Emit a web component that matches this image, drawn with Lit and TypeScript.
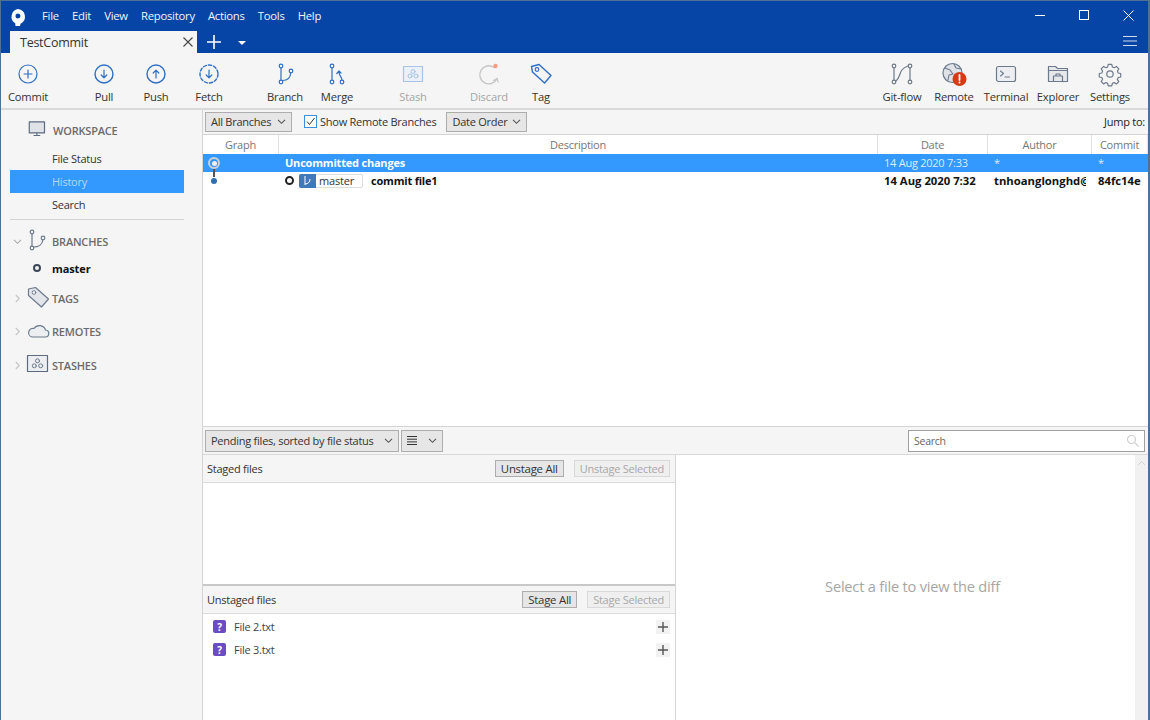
import { LitElement, html, css, svg } from "lit";
import { customElement } from "lit/decorators.js";

const B = "#2f6fc4";
const G = "#6d7a8c";

const ic = (body: unknown, w = 26, h = 26) =>
  html`<svg width=${w} height=${h} viewBox="0 0 26 26" fill="none" stroke-linecap="round" stroke-linejoin="round">${body}</svg>`;

const icons: Record<string, unknown> = {
  commit: ic(svg`<circle cx="13" cy="13" r="9" stroke=${B} stroke-width="1.2"/><path d="M13 9v8M9 13h8" stroke=${B} stroke-width="1.2"/>`),
  pull: ic(svg`<circle cx="13" cy="13" r="9" stroke=${B} stroke-width="1.4"/><path d="M13 9v7.5M10.2 14l2.8 2.8 2.8-2.8" stroke=${B} stroke-width="1.2"/>`),
  push: ic(svg`<circle cx="13" cy="13" r="9" stroke=${B} stroke-width="1.4"/><path d="M13 17V9.5M10.2 12L13 9.2l2.8 2.8" stroke=${B} stroke-width="1.2"/>`),
  fetch: ic(svg`<circle cx="13" cy="13" r="9" stroke=${B} stroke-width="1.4" stroke-dasharray="3.2 2"/><path d="M13 9v7.5M10.2 14l2.8 2.8 2.8-2.8" stroke=${B} stroke-width="1.2"/>`),
  branch: ic(svg`<circle cx="9" cy="5" r="1.8" stroke=${B} stroke-width="1.2"/><circle cx="9" cy="21" r="1.8" stroke=${B} stroke-width="1.2"/><circle cx="19" cy="10" r="1.8" stroke=${B} stroke-width="1.2"/><path d="M9 7v12M10.5 19.5c5 0 8-3 8.2-7.7" stroke=${B} stroke-width="1.2"/>`),
  merge: ic(svg`<circle cx="8" cy="5" r="1.8" stroke=${B} stroke-width="1.2"/><circle cx="8" cy="21" r="1.8" stroke=${B} stroke-width="1.2"/><circle cx="18" cy="21" r="1.8" stroke=${B} stroke-width="1.2"/><path d="M8 7v12M18 19c0-3-3-4-3-8M12.8 12.5L15 10l2 2" stroke=${B} stroke-width="1.2"/>`),
  stash: ic(svg`<rect x="3.5" y="5.5" width="19" height="15" fill="#eaf1fb" stroke="#a9c3e6" stroke-width="1.2"/><circle cx="13" cy="10.5" r="2" stroke="#a9c3e6"/><circle cx="10" cy="15" r="2" stroke="#a9c3e6"/><circle cx="16" cy="15" r="2" stroke="#a9c3e6"/>`),
  discard: ic(svg`<path d="M18 6.5A9 9 0 1 0 21 17.5" stroke="#c6c6c6" stroke-width="1.4"/><path d="M17.5 19.5l3.5-2 1.2 3.6" stroke="#c6c6c6" stroke-width="1.2"/><circle cx="19.5" cy="5" r="2.2" fill="#ff9c80"/>`),
  tag: ic(svg`<path d="M3.5 5.5l7.5-2 12 11-6.500 7.500-12-11z" stroke=${B} stroke-width="1.4"/><circle cx="9" cy="8.500" r="1.800" stroke=${B} stroke-width="1.2"/>`),
  gitflow: ic(svg`<circle cx="5" cy="5" r="1.8" stroke=${G} stroke-width="1.2"/><circle cx="5" cy="21" r="1.8" stroke=${G} stroke-width="1.2"/><circle cx="21" cy="5" r="1.8" stroke=${G} stroke-width="1.2"/><circle cx="21" cy="21" r="1.8" stroke=${G} stroke-width="1.2"/><path d="M5 7v12M21 7v12M7 20c5-3 2-12 12-15" stroke=${G} stroke-width="1.2"/>`),
  remote: ic(svg`<circle cx="11.500" cy="12" r="9.500" fill="#dfe3e8" stroke=${G} stroke-width="1.2"/><path d="M4 7l5 2 3 4-4 1-1 5M13 3l2 4 5 1M14 13l4 3" stroke=${G} stroke-width="1.1"/><circle cx="18.500" cy="18" r="7" fill="#d93a16"/><path d="M18.500 14v5" stroke="#fff" stroke-width="1.8"/><circle cx="18.500" cy="21.600" r="1" fill="#fff"/>`),
  terminal: ic(svg`<rect x="3.500" y="5.500" width="19" height="15" rx="2" fill="#eceef1" stroke=${G} stroke-width="1.2"/><path d="M7.500 10l3 2.500-3 2.500M12 16h4.500" stroke=${G} stroke-width="1.1"/>`),
  explorer: ic(svg`<path d="M3.500 20.500V5.500h7l2 2h10v13z" fill="#e6e8ec" stroke=${G} stroke-width="1.2"/><path d="M3.500 9.500h19" stroke=${G}/><path d="M8.500 20.500V15h9v5.500M11 15v-2h4v2" stroke=${G} stroke-width="1.2"/>`),
  settings: ic(svg`<circle cx="13" cy="13" r="3.200" stroke=${G} stroke-width="1.2"/><path d="M11 3.500h4l.6 2.800 2 .9 2.500-1.500 2.700 2.800-1.500 2.400.8 2.100 2.800.6v3.800l-2.800.6-.8 2-.2 0 1.700 2.500-2.700 2.700-2.500-1.600-2 .9-.6 2.800h-4l-.6-2.800-2-.9-2.500 1.600-2.700-2.700 1.600-2.500-.9-2-2.800-.6v-3.800l2.800-.6.9-2.100-1.600-2.400 2.700-2.800 2.500 1.500 2-.9z" transform="translate(1.300 .3) scale(.9)" stroke=${G} stroke-width="1.3"/>`),
  monitor: ic(svg`<rect x="1.500" y="3.500" width="18" height="13" fill="#dfe3e8" stroke="#5d6b80" stroke-width="1.4"/><path d="M7 19.500h7M10.500 17v2" stroke="#5d6b80" stroke-width="1.3"/>`, 22, 22),
  sbranch: ic(svg`<circle cx="6" cy="4" r="1.800" stroke=${G} stroke-width="1.2"/><circle cx="6" cy="20" r="1.800" stroke=${G} stroke-width="1.2"/><circle cx="17" cy="10" r="1.800" stroke=${G} stroke-width="1.2"/><path d="M6 6v12M7.500 19c5.500 0 9-3 9.300-7.300" stroke=${G} stroke-width="1.2"/>`),
  stags: ic(svg`<path d="M2.500 4l7-1.500 13 11.500-7 8-13-11.500z" fill="#e2e5ea" stroke=${G} stroke-width="1.2"/><circle cx="8" cy="7.500" r="1.800" fill="#fff" stroke=${G}/>`),
  sremotes: ic(svg`<path d="M6 18h13a3.500 3.500 0 0 0 .5-7A6.500 6.500 0 0 0 8 9.500 4.300 4.300 0 0 0 6 18z" fill="#eceef1" stroke=${G} stroke-width="1.200"/>`),
  sstash: ic(svg`<rect x="1.500" y="3.500" width="20" height="16" fill="#eceef1" stroke="#5d6b80" stroke-width="1.200"/><circle cx="11.500" cy="8.800" r="2" stroke=${G}/><circle cx="8.300" cy="13.800" r="2" stroke=${G}/><circle cx="14.700" cy="13.800" r="2" stroke=${G}/>`),
};

const chevron = (dir: "down" | "right", color = "#555") => html`<svg class="chev" width="9" height="9" viewBox="0 0 9 9" fill="none" stroke=${color} stroke-width="1.1">
  <path d=${dir === "down" ? "M1 2.800l3.500 3.500L8 2.800" : "M2.800 1l3.500 3.500L2.800 8"} /></svg>`;

@customElement("app-root")
export class AppRoot extends LitElement {
  static styles = css`
    :host {
      display: flex;
      flex-direction: column;
      width: 1150px;
      height: 720px;
      overflow: hidden;
      font-family: "Open Sans", "Noto Sans", sans-serif;
      font-size: 11px;
      letter-spacing: -0.25px;
      color: #222;
      background: #f5f5f5;
      box-sizing: border-box;
      border-left: 1px solid #4f7195;
      border-right: 2px solid #4f7195;
      border-top: 1px solid #4f7195;
    }
    * { box-sizing: border-box; }

    .titlebar { height: 52px; background: #0645a5; color: #fff; display: flex; flex-direction: column; flex: none; }
    .top { height: 30px; padding-bottom: 2px; display: flex; align-items: center; }
    .logo { width: 41px; padding: 4px 0 0 9px; display: flex; }
    .menu { display: flex; gap: 13.100px; font-size: 11.300px; color: #f0f4fb; }
    .winctl { margin-left: auto; display: flex; }
    .winctl svg { display: block; }
    .winbtn { width: 44px; height: 28px; display: flex; align-items: center; justify-content: center; }
    .winbtn:nth-child(2) { margin-right: 2px; }
    .winbtn:last-child { width: 40px; }
    .tabs { height: 22px; display: flex; align-items: stretch; }
    .tab { width: 187px; margin-left: 9px; background: #f5f5f5; color: #333; font-size: 12.500px; display: flex; align-items: center; justify-content: space-between; padding: 0 1px 0 10px; }
    .tabtools { display: flex; align-items: center; flex: 1; }
    .plus { width: 34px; display: flex; justify-content: center; }
    .caret { width: 0; height: 0; border-left: 4px solid transparent; border-right: 4px solid transparent; border-top: 4px solid #fff; margin-left: 7px; margin-top: 2px; }
    .burger { margin-left: auto; margin-right: 11px; margin-bottom: 2px; display: flex; }

    .toolbar { height: 57px; flex: none; display: flex; padding-left: 1px; border-bottom: 2px solid #d9d9d9; background: #f5f5f5; }
    .tool { width: 52px; display: flex; flex-direction: column; align-items: center; padding-top: 8px; white-space: nowrap; font-size: 11.200px; letter-spacing: -0.2px; }
    .tool svg { display: block; }
    .tool span { margin-top: 3px; line-height: 14px; color: #333; }
    .tool.off span { color: #a5a5a5; }
    .wide { margin-right: 24px; }
    .fetch { margin-left: 1px; }
    .right { margin-left: auto; display: flex; padding-right: 12px; }

    .body { flex: 1; display: flex; min-height: 0; }
    .side { width: 201px; flex: none; padding: 8px 18px 0 9px; background: #f5f5f5; }
    .head { display: flex; align-items: center; color: #6b6b6b; font-size: 11px; font-weight: 600; letter-spacing: -0.2px; height: 24px; }
    .head .ar { width: 16px; padding-left: 3px; display: flex; }
    .head svg:not(.chev) { flex: none; }
    .wshead { padding-left: 18px; height: 24px; margin-bottom: 5px; }
    .wshead svg:not(.chev) { margin-right: 3px; }
    .nav { height: 23px; padding-left: 42px; padding-bottom: 1px; display: flex; align-items: center; color: #333; }
    .nav:nth-child(4) { padding-bottom: 0; }
    .nav.sel { background: #3399ff; color: #b5d8f7; padding-bottom: 0; }
    .hr { height: 1px; background: #d4d4d4; margin: 3px 0 0; }
    .master { display: flex; align-items: center; height: 20px; margin-top: 5px; font-weight: 700; color: #111; padding-left: 23px; letter-spacing: -0.1px; }
    .ring { width: 8px; height: 8px; border: 2px solid #3b4658; border-radius: 50%; margin-right: 11px; flex: none; }
    .branches { margin-top: 9px; }
    .tags { margin-top: 8px; }
    .gap { margin-top: 9.500px; }

    .main { flex: 1; display: flex; flex-direction: column; min-width: 0; border-left: 1px solid #d4d4d4; }
    .filter { height: 24px; flex: none; display: flex; align-items: center; padding: 0 3px 0 2px; background: #f5f5f5; gap: 8px; }
    .combo { height: 20px; background: #e6e6e6; border: 1px solid #adadad; display: flex; align-items: center; justify-content: space-between; padding: 0 5px 1px 5px; color: #333; white-space: nowrap; }
    .check { display: flex; align-items: center; gap: 3px; color: #333; margin-left: 4px; margin-right: 2px; white-space: nowrap; padding-bottom: 1px; }
    .box { width: 13px; height: 13px; background: #fff; border: 1px solid #3f8fe0; display: flex; flex: none; }
    .jump { margin-left: auto; padding-bottom: 1px; }

    .table { height: 293px; flex: none; background: #fff; border-top: 1px solid #d4d4d4; border-bottom: 1px solid #d4d4d4; }
    .row { display: grid; grid-template-columns: 76px 599px 110px 104px 56px; white-space: nowrap; }
    .row > div { overflow: hidden; padding: 0 6px 1px; display: flex; align-items: center; }
    .hdr { height: 19px; color: #777; }
    .hdr > div { justify-content: center; border-right: 1px solid #e2e2e2; }
    .r1 { height: 18px; background: #3399ff; color: #dcebfb; }
    .r2 { height: 18px; font-weight: 700; color: #111; letter-spacing: 0; font-size: 11.300px; }
    .r1 .desc { color: #fff; font-weight: 700; padding-left: 6px; letter-spacing: -0.2px; }
    .r2 .desc { padding-left: 6px; overflow: visible; font-size: 11px; letter-spacing: -0.2px; }
    .row .graph { padding: 0 0 0 5px; position: relative; overflow: visible; }
    .gdot { width: 12px; height: 12px; border-radius: 50%; border: 2px solid #cfcfcf; background: #3399ff; display: flex; align-items: center; justify-content: center; }
    .gdot i { width: 5px; height: 5px; border-radius: 50%; background: #eeeeee; }
    .gline { position: absolute; left: 10px; top: -3px; width: 2px; height: 8px; background: #555; }
    .gblue { position: absolute; left: 8px; top: 6px; width: 6px; height: 6px; border-radius: 50%; background: #2f6fb0; }
    .badge { display: inline-flex; height: 14px; border: 1px solid #ddd; border-radius: 2px; margin-right: 8px; font-weight: 400; color: #333; width: 64px; align-items: center; flex: none; }
    .badge b { width: 17px; height: 14px; background: #3f79b8; border-radius: 2px 0 0 2px; margin: 0 3px 0 -1px; display: flex; align-items: center; justify-content: center; flex: none; }
    .hollow { width: 9px; height: 9px; border: 2px solid #222; border-radius: 50%; margin-right: 5px; flex: none; }
    .clip { overflow: hidden; min-width: 0; }

    .lowbar { height: 28px; flex: none; display: flex; align-items: center; padding: 0 3px 0 2px; gap: 2px; background: #f5f5f5; border-bottom: 1px solid #d9d9d9; }
    .lowbar .combo { height: 22px; }
    .search { margin-left: auto; width: 237px; height: 22px; background: #fff; border: 1px solid #a0a0a0; display: flex; align-items: center; justify-content: space-between; padding: 0 5px; color: #666; font-size: 10.500px; }

    .split { flex: 1; display: flex; min-height: 0; }
    .left { width: 473px; flex: none; display: flex; flex-direction: column; border-right: 1px solid #d4d4d4; }
    .phead { height: 28px; flex: none; display: flex; align-items: center; padding: 0 5px 0 4px; background: #f5f5f5; color: #333; border-bottom: 1px solid #dcdcdc; }
    .title { padding-bottom: 1px; }
    .btns { margin-left: auto; display: flex; gap: 10px; }
    .btn { height: 17px; padding: 0 5px; border: 1px solid #adadad; background: #e6e6e6; display: flex; align-items: center; color: #333; white-space: nowrap; font-size: 11.400px; }
    .btn.off { background: #efefef; border-color: #d9d9d9; color: #a8a8a8; font-size: 11px; }
    .list { background: #fff; flex: none; height: 103px; border-bottom: 2px solid #c8c8c8; }
    .files { background: #fff; flex: 1; padding-top: 1px; }
    .file { height: 23px; display: flex; align-items: center; padding-left: 10px; color: #444; }
    .q { width: 13px; height: 13px; background: #6a4dc4; border-radius: 2px; color: #fff; font-weight: 700; font-size: 10px; display: flex; align-items: center; justify-content: center; margin-right: 8px; }
    .add { margin-left: auto; margin-right: 5px; width: 14px; height: 14px; background: #f2f2f2; display: flex; align-items: center; justify-content: center; }
    .diff { flex: 1; background: #fff; display: flex; min-width: 0; }
    .msg { flex: 1; display: flex; align-items: center; justify-content: center; color: #a6a6a6; font-size: 14.600px; letter-spacing: -0.2px; padding: 0 0 3px 14px; }
    .scroll { width: 13px; background: #f1f1f1; display: flex; justify-content: center; padding-top: 5px; }
  `;

  private tool(id: string, label: string, cls = "") {
    return html`<div class="tool ${cls}">${icons[id]}<span>${label}</span></div>`;
  }

  render() {
    return html`
      <div class="titlebar">
        <div class="top">
          <div class="logo">
            <svg width="16" height="17" viewBox="0 0 16 17"><path fill-rule="evenodd" fill="#fff" d="M8 0a7.800 7.800 0 0 1 2.500 14.800L10 17H5.500l-.3-2.700A7.800 7.800 0 0 1 8 0zm0 4.500a2.500 2.500 0 1 0 0 5 2.500 2.500 0 0 0 0-5z"/></svg>
          </div>
          <div class="menu">${["File", "Edit", "View", "Repository", "Actions", "Tools", "Help"].map((m) => html`<span>${m}</span>`)}</div>
          <div class="winctl">
            <div class="winbtn"><svg width="11" height="11"><path d="M0 5.500h10" stroke="#fff"/></svg></div>
            <div class="winbtn"><svg width="11" height="11"><rect x=".5" y=".5" width="9" height="9" fill="none" stroke="#fff"/></svg></div>
            <div class="winbtn"><svg width="11" height="11"><path d="M.5.500l10 10M10.500.500l-10 10" stroke="#fff"/></svg></div>
          </div>
        </div>
        <div class="tabs">
          <div class="tab">TestCommit
            <svg width="16" height="16" viewBox="0 0 16 16"><path d="M3.500 3.500l9 9M12.500 3.500l-9 9" stroke="#444" stroke-width="1.100"/></svg>
          </div>
          <div class="tabtools">
            <div class="plus"><svg width="14" height="14"><path d="M7 0v14M0 7h14" stroke="#fff" stroke-width="1.600"/></svg></div>
            <div class="caret"></div>
            <div class="burger"><svg width="14" height="12"><path d="M0 1.500h14M0 6h14M0 10.500h14" stroke="#cfdcf0" stroke-width="1.200"/></svg></div>
          </div>
        </div>
      </div>

      <div class="toolbar">
        ${this.tool("commit", "Commit", "wide")}
        ${this.tool("pull", "Pull")}
        ${this.tool("push", "Push")}
        ${this.tool("fetch", "Fetch", "wide fetch")}
        ${this.tool("branch", "Branch")}
        ${this.tool("merge", "Merge", "wide")}
        ${this.tool("stash", "Stash", "off wide")}
        ${this.tool("discard", "Discard", "off")}
        ${this.tool("tag", "Tag")}
        <div class="right">
          ${this.tool("gitflow", "Git-flow")}
          ${this.tool("remote", "Remote")}
          ${this.tool("terminal", "Terminal")}
          ${this.tool("explorer", "Explorer")}
          ${this.tool("settings", "Settings")}
        </div>
      </div>

      <div class="body">
        <div class="side">
          <div class="head wshead">${icons.monitor}WORKSPACE</div>
          <div class="nav">File Status</div>
          <div class="nav sel">History</div>
          <div class="nav">Search</div>
          <div class="hr"></div>
          <div class="head branches"><span class="ar">${chevron("down", "#aaa")}</span>${icons.sbranch}BRANCHES</div>
          <div class="master"><span class="ring"></span>master</div>
          <div class="head tags"><span class="ar">${chevron("right", "#c4c4c4")}</span>${icons.stags}TAGS</div>
          <div class="head gap"><span class="ar">${chevron("right", "#c4c4c4")}</span>${icons.sremotes}REMOTES</div>
          <div class="head gap"><span class="ar">${chevron("right", "#c4c4c4")}</span>${icons.sstash}STASHES</div>
        </div>

        <div class="main">
          <div class="filter">
            <div class="combo" style="width:87px">All Branches ${chevron("down")}</div>
            <div class="check">
              <span class="box"><svg width="11" height="11"><path d="M2 5.500l2.500 3 5-6.500" fill="none" stroke="#333" stroke-width="1"/></svg></span>
              Show Remote Branches
            </div>
            <div class="combo" style="width:81px">Date Order ${chevron("down")}</div>
            <span class="jump">Jump to:</span>
          </div>

          <div class="table">
            <div class="row hdr"><div>Graph</div><div>Description</div><div>Date</div><div>Author</div><div>Commit</div></div>
            <div class="row r1">
              <div class="graph"><span class="gdot"><i></i></span></div>
              <div class="desc">Uncommitted changes</div>
              <div>14 Aug 2020 7:33</div><div>*</div><div>*</div>
            </div>
            <div class="row r2">
              <div class="graph"><span class="gline"></span><span class="gblue"></span></div>
              <div class="desc"><span class="hollow"></span>
                <span class="badge"><b><svg width="11" height="11" viewBox="0 0 11 11" fill="none" stroke="#fff"><path d="M3 1v9M3 9c3 0 5-2 5-5"/></svg></b>master</span>
                commit file1</div>
              <div>14 Aug 2020 7:32</div><div><span class="clip">tnhoanglonghd@g</span></div><div>84fc14e</div>
            </div>
          </div>

          <div class="lowbar">
            <div class="combo" style="width:194px">Pending files, sorted by file status ${chevron("down")}</div>
            <div class="combo" style="width:42px">
              <svg width="10" height="9"><path d="M0 .500h10M0 3.200h10M0 5.900h10M0 8.500h10" stroke="#333"/></svg>${chevron("down")}
            </div>
            <div class="search">Search
              <svg width="13" height="13" fill="none" stroke="#d0d0d0" stroke-width="1.200"><circle cx="5.500" cy="5.500" r="4"/><path d="M8.500 8.500l4 4"/></svg>
            </div>
          </div>

          <div class="split">
            <div class="left">
              <div class="phead"><span class="title">Staged files</span>
                <div class="btns"><div class="btn">Unstage All</div><div class="btn off">Unstage Selected</div></div>
              </div>
              <div class="list"></div>
              <div class="phead">Unstaged files
                <div class="btns"><div class="btn">Stage All</div><div class="btn off">Stage Selected</div></div>
              </div>
              <div class="files">
                ${["File 2.txt", "File 3.txt"].map(
                  (f) => html`<div class="file"><span class="q">?</span>${f}
                    <span class="add"><svg width="10" height="10"><path d="M5 0v10M0 5h10" stroke="#555" stroke-width="1.400"/></svg></span></div>`
                )}
              </div>
            </div>
            <div class="diff">
              <div class="msg">Select a file to view the diff</div>
              <div class="scroll"><svg width="9" height="6" fill="none" stroke="#d2d2d2"><path d="M1 5l3.500-3.500L8 5"/></svg></div>
            </div>
          </div>
        </div>
      </div>
    `;
  }
}
